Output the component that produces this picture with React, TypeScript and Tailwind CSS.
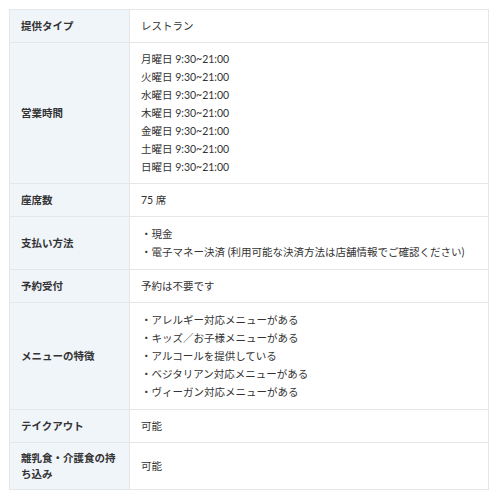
const rows: { label: string; values: string[]; list?: boolean }[] = [
  { label: "提供タイプ", values: ["レストラン"] },
  {
    label: "営業時間",
    values: ["月", "火", "水", "木", "金", "土", "日"].map((d) => `${d}曜日 9:30~21:00`),
  },
  { label: "座席数", values: ["75 席"] },
  {
    label: "支払い方法",
    values: ["現金", "電子マネー決済 (利用可能な決済方法は店舗情報でご確認ください)"],
    list: true,
  },
  { label: "予約受付", values: ["予約は不要です"] },
  {
    label: "メニューの特徴",
    values: [
      "アレルギー対応メニューがある",
      "キッズ／お子様メニューがある",
      "アルコールを提供している",
      "ベジタリアン対応メニューがある",
      "ヴィーガン対応メニューがある",
    ],
    list: true,
  },
  { label: "テイクアウト", values: ["可能"] },
  { label: "離乳食・介護食の持ち込み", values: ["可能"] },
];

export default function App() {
  return (
    <div
      className="min-h-[500px] bg-white px-[9px] pt-[9px] text-[#333] text-[10.5px]"
      style={{ fontFamily: '"Lato", "Noto Sans CJK JP", sans-serif' }}
    >
      <table className="w-[480px] border-collapse">
        <tbody>
          {rows.map((r) => (
            <tr key={r.label}>
              <th className="w-[120px] border border-[#e4e6e8] bg-[#f0f5fa] py-[7px] pl-[11px] pr-[12px] text-left align-middle font-bold leading-[16px]">
                {r.label}
              </th>
              <td className="border border-[#e4e6e8] py-[7px] pl-[11px] pr-[8px] align-middle leading-[18px]">
                {r.list ? (
                  <ul className="py-[1px]">
                    {r.values.map((v) => (
                      <li key={v}>・{v}</li>
                    ))}
                  </ul>
                ) : (
                  r.values.map((v) => <div key={v}>{v}</div>)
                )}
              </td>
            </tr>
          ))}
        </tbody>
      </table>
    </div>
  );
}
